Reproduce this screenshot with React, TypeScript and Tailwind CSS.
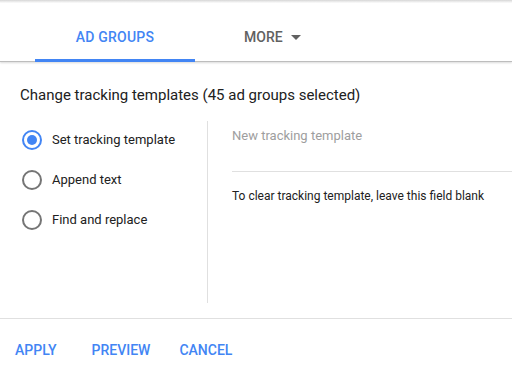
export default function App() {
  const options = ["Set tracking template", "Append text", "Find and replace"];
  return (
    <div
      className="w-[512px] h-[365px] bg-white relative overflow-hidden"
      style={{ fontFamily: "Roboto, 'Liberation Sans', sans-serif" }}
    >
      <div className="h-[3px] bg-gradient-to-b from-[#d6d6d6] to-white" />

      <div className="flex h-[59px] border-b border-[#bdbdbd] shadow-[0_1px_2px_rgba(0,0,0,0.15)]">
        <div className="ml-[35px] w-[160px] flex items-center justify-center border-b-[3px] border-[#4285f4] mb-[-1px] pt-[12px]">
          <span className="text-[14px] font-medium text-[#4285f4] tracking-[0.2px]">
            AD GROUPS
          </span>
        </div>
        <div className="ml-[49px] flex items-center pt-[10px]">
          <span className="text-[14px] font-medium text-[#616161]">MORE</span>
          <svg width="10" height="5" viewBox="0 0 10 5" className="ml-[8px]">
            <path d="M0 0h10L5 5z" fill="#616161" />
          </svg>
        </div>
      </div>

      <div className="pl-[20px] pt-[22px] text-[15px] text-[#212121]">
        Change tracking templates (45 ad groups selected)
      </div>

      <div className="flex mt-[14px] h-[182px]">
        <div className="w-[207px] pl-[22px] pt-[9px] flex flex-col gap-[20px]">
          {options.map((o, i) => (
            <div key={o} className="flex items-center h-[20px]">
              <div
                className={
                  i === 0
                    ? "w-[20px] h-[20px] rounded-full border-2 border-[#4285f4] flex items-center justify-center"
                    : "w-[20px] h-[20px] rounded-full border-2 border-[#757575]"
                }
              >
                {i === 0 && <div className="w-[10px] h-[10px] rounded-full bg-[#4285f4]" />}
              </div>
              <span className="ml-[10px] text-[13px] text-[#212121]">{o}</span>
            </div>
          ))}
        </div>
        <div className="w-px bg-[#e0e0e0]" />
        <div className="flex-1 pl-[24px]">
          <div className="h-[51px] border-b border-[#e0e0e0] pt-[5px] text-[13px] text-[#9e9e9e]">
            New tracking template
          </div>
          <div className="pt-[15px] text-[12px] text-[#212121]">
            To clear tracking template, leave this field blank
          </div>
        </div>
      </div>

      <div className="mt-[15px] border-t border-[#e0e0e0] flex items-center h-[64px] pl-[15px] text-[14px] font-medium text-[#4285f4]">
        <span>APPLY</span>
        <span className="ml-[35px]">PREVIEW</span>
        <span className="ml-[29px]">CANCEL</span>
      </div>
    </div>
  );
}
